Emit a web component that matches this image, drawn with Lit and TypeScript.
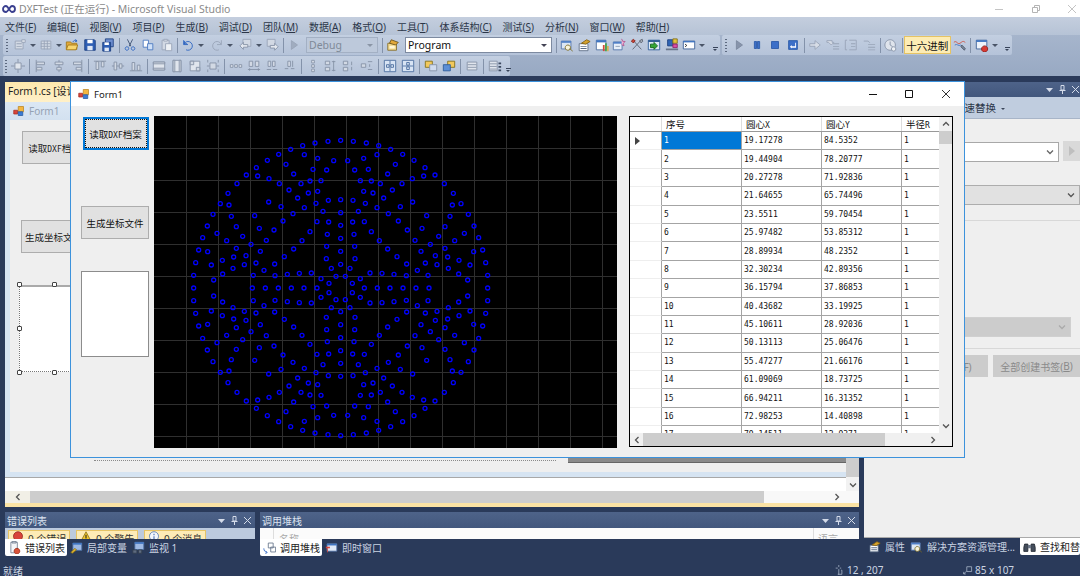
import { css, html, svg, LitElement } from "lit";
import { customElement } from "lit/decorators.js";

const GR = "#8591a6";
const FD = "#98a4b7";
const PALE = "#d2d9e4";
const BL = "#2a62c0";

// each icon is a list of [path, fill, stroke]
type Part = [string, string, string?];
const ICONS: Record<string, Part[]> = {
  formico: [["M7 2h7v7H7z", "#f4b63f", "#b98420"], ["M1 7h5v5H1z", "#d8443a", "#a52b22"], ["M7 9h6v5H7z", "#3a7bd5", "#24599f"]],
  newp: [["M2.5 3.5h9v9h-9z", PALE, FD], ["M4 6h6v1H4zM4 9h6v1H4z", FD], ["M10 2h4v3h-4z", "#dde2ea", FD]],
  add: [["M2.5 3.5h11v9h-11z", PALE, FD], ["M2 6.5h11M2 9.5h11M6 3v10M9.5 3v10", "none", FD]],
  open: [["M1.5 4.5h5l1 1.5h6v7h-12z", "#e3a93a", "#a47a1c"], ["M3.5 8h11l-2 5.5h-11z", "#f8d56e", "#a47a1c"], ["M9 4.5c1-2 3-2.5 4.5-1M12 1.5l1.8 2-2.4.5", "none", BL]],
  save: [["M2 2h11l1 1v11H2z", "#2f5fb4", "#1d3f80"], ["M5 2h6v4H5z", "#fff"], ["M5 9h6v5H5z", "#dfe7f4"]],
  saveall: [["M5 1h9v9H5z", "#6f8fd0", "#1d3f80"], ["M2 5h9v10H2z", "#2f5fb4", "#1d3f80"], ["M4 5h5v3H4z", "#fff"], ["M4 11h5v4H4z", "#dfe7f4"]],
  cut: [["M5 1.5l4 8M11 1.5l-4 8", "none", "#3c4f70"], ["M4.5 10a2 2 0 1 0 .01 0M11.5 10a2 2 0 1 0 .01 0", "none", BL]],
  copy: [["M2.5 2.5h6v8h-6z", "#fff", "#4a78c0"], ["M7.5 6.5h6v7h-6z", "#cfe0f7", "#4a78c0"]],
  paste: [["M3.5 2.5h8v11h-8z", PALE, FD], ["M5.5 1.5h4v2h-4z", "#e4e8ef", FD], ["M7.5 6.5h7v8h-7z", "#eef1f5", FD]],
  undo: [["M3 2.5v5h5", "none", BL], ["M3.3 7.2a5 5 0 1 1 2.5 6.3", "none", BL], ["M4 3.5v3h3", "none", BL]],
  redo: [["M13 2.5v5H8", "none", FD], ["M12.7 7.2a5 5 0 1 0-2.5 6.3", "none", FD]],
  navb: [["M4.5 1.5h9v8h-9z", PALE, FD], ["M1 9l4-4v2.5h5v3H5V13z", "#e4e8ef", GR]],
  navf: [["M2.5 1.5h9v8h-9z", PALE, FD], ["M15 10l-4-4v2.5H6v3h5V14z", "#e4e8ef", GR]],
  play: [["M5 3l7 5-7 5z", "#a0acbf", FD]],
  playd: [["M5 3l7 5-7 5z", "#8794ab", "#7c889e"]],
  config: [["M2 6h10v8H2z", "#f3d98b", "#86702f"], ["M6 2l8 3-3 3-7-2z", "#e3a93a", "#6b5518"], ["M4 9h6v3H4z", "#fff6d6"]],
  find: [["M1.5 3.5h11v9h-11z", "#dbe6f4", "#5173a8"], ["M1.5 3.5h11v2h-11z", "#4f7fc7"], ["M9 8a3 3 0 1 0 .01 0", "#f7f3dc", "#7b6a22"], ["M11 12l3.5 3", "none", "#7b6a22"]],
  props: [["M2.5 6.5h10v8h-10z", "#fff", "#5b6d86"], ["M4 9h7v1H4zM4 11.5h7v1H4z", "#5b6d86"], ["M5 6l6-4 4 2-5 3z", "#d6a32d", "#856214"]],
  chart: [["M1.5 2.5h11v11h-11z", "#fff", "#4a6d9e"], ["M1.5 2.5h11v2.5h-11z", "#3e74c2"], ["M9 8h2v7H9z", "#d14b3a"], ["M11.5 6h2v9h-2z", "#45a64a"], ["M14 9h1.5v6H14z", "#e2a92e"]],
  wstar: [["M1.5 4.5h10v9h-10z", "#e7effa", "#5173a8"], ["M1.5 4.5h10v2h-10z", "#4f7fc7"], ["M11 1l1.2 2.8 2.8.2-2 2 .7 3-2.7-1.5", "#f0b9d8", "#b2558f"], ["M4 9h5v1H4z", "#8a9ab0"]],
  tools: [["M3 2l10 11M13 2L3 13", "none", "#5c6470"], ["M1.5 3.5l2.5-2 2 2-2.5 2z", "#c9463a", "#86241b"], ["M11 3l3-1.5 .5 2.5-2 1.5z", "#aab3bf", "#5c6470"]],
  arrowbox: [["M1.5 2.5h13v11h-13z", "#dce8f6", "#2e5d99"], ["M1.5 2.5h13v2h-13z", "#27568f"], ["M4 7h4V5l4 4-4 4v-2H4z", "#34a534", "#14661c"]],
  tree: [["M3 2h6v7H3z", "#2f65b5", "#1d3f80"], ["M9 1h5v5H9z", "#e5c33c", "#84701a"], ["M9 7h5v4H9z", "#d94fa5", "#8d2268"], ["M1 12h14v2H1z", "#68758a"]],
  cmd: [["M1.5 3.5h13v9h-13z", "#fff", "#3a5f96"], ["M1.5 3.5h13v1.5h-13z", "#3e74c2"], ["M3.5 7l2 1.5-2 1.5", "none", "#222"]],
  pause: [["M5 4h2.5v8H5zM8.5 4H11v8H8.5z", "#3c6fc8", "#2c5aa8"]],
  stop: [["M4 4h8v8H4z", "#3c6fc8", "#2c5aa8"]],
  restart: [["M3 3h10v10H3z", "#3c6fc8", "#2c5aa8"], ["M10.5 5.5v4h-4V8l-2 2 2 2v-1h5V5.5z", "#fff"]],
  stepin: [["M2 6.5h6V3l6 5-6 5V9.5H2z", "#d6dce6", FD]],
  stepa: [["M1 3h6v2h2l-3 3-3-3H1z", "#d6dce6", FD], ["M8 6h7v1H8zM8 9h7v1H8zM8 12h7v1H8z", FD]],
  stepb: [["M3.5 2.5h-2v11h2", "none", FD], ["M6 2.5h8v11H6", "none", FD], ["M8 6h5v1H8zM8 9h5v1H8z", FD]],
  stepc: [["M2 3.5h5l2 2", "none", FD], ["M7 7h8v1H7zM7 10h8v1H7zM7 13h8v1H7z", FD]],
  clock: [["M7 2a6 6 0 1 0 .01 0", "#dfe4ec", GR], ["M7 4v4l3 2", "none", GR], ["M11 10a2.5 2.5 0 1 0 .01 0", "#eef1f5", GR]],
  wave: [["M1 5c3-3 4 3 7 1s3-3 6-1", "none", "#d14b3a"], ["M2 8c3-2 4 2 7 0", "none", "#3e74c2"], ["M10 8l4 4-1 2-4-4z", "#7b8799", "#4d596b"]],
  rec: [["M1.5 2.5h12v10h-12z", "#eef3fb", "#3a5f96"], ["M1.5 2.5h12v2h-12z", "#3e74c2"], ["M11 9a3.5 3.5 0 1 0 .01 0", "#d83a34", "#8d1f1b"]],
  snap: [["M4.5 4.5h7v7h-7z", "#e0e5ed", GR], ["M8 0v4M8 12v4M0 8h4M12 8h4", "none", GR]],
  al: [["M2.5 1v14", "none", GR], ["M3 3.5h9v3H3zM3 9.5h6v3H3z", PALE, GR]],
  ac: [["M8 1v14", "none", GR], ["M3.5 3.5h9v3h-9zM5.5 9.5h5v3h-5z", PALE, GR]],
  ar: [["M13.5 1v14", "none", GR], ["M4 3.5h9v3H4zM7 9.5h6v3H7z", PALE, GR]],
  at: [["M1 2.5h14", "none", GR], ["M3.5 3h3v9h-3zM9.5 3h3v6h-3z", PALE, GR]],
  am: [["M1 8h14", "none", GR], ["M3.5 3.5h3v9h-3zM9.5 5.5h3v5h-3z", PALE, GR]],
  ab: [["M1 13.5h14", "none", GR], ["M3.5 4h3v9h-3zM9.5 7h3v6h-3z", PALE, GR]],
  sw: [["M1.5 3.5h13v9h-13z", "#e0e5ed", GR], ["M1.5 3.5h13v2h-13zM1.5 10.5h13v2h-13z", PALE, GR]],
  sh: [["M3.5 1.5h9v13h-9z", "#e0e5ed", GR], ["M3.5 1.5h2v13h-2zM10.5 1.5h2v13h-2z", PALE, GR]],
  sb: [["M2.5 2.5h11v11h-11z", "#e0e5ed", GR], ["M2.5 2.5h4v4h-4zM9.5 9.5h4v4h-4z", PALE, GR]],
  sg: [["M4.5 4.5h7v7h-7z", PALE, GR], ["M2 1v3M14 1v3M2 12v3M14 12v3M1 8h3M12 8h3", "none", GR]],
  hs1: [["M1.5 6.5h3v3h-3zM6.5 6.5h3v3h-3zM11.5 6.5h3v3h-3z", "#e0e5ed", GR]],
  hs2: [["M2.5 2.5h4v6h-4zM9.5 2.5h4v6h-4z", PALE, GR], ["M1 12h14M3 10.5v3M13 10.5v3", "none", GR]],
  hs3: [["M3.5 2.5h3v6h-3zM8.5 2.5h3v6h-3z", PALE, GR], ["M2 12h5M9 12h5", "none", GR]],
  hs4: [["M5.5 2.5h3v6h-3z", PALE, GR], ["M11 2v7M2 11h4M9 11h4", "none", GR]],
  vs1: [["M6.5 1.5h3v3h-3zM6.5 6.5h3v3h-3zM6.5 11.5h3v3h-3z", "#e0e5ed", GR]],
  vs2: [["M1.5 2.5h5v4h-5zM1.5 9.5h5v4h-5z", PALE, GR], ["M11 2v12M9 3h4M9 13h4", "none", GR]],
  vs3: [["M1.5 2.5h5v4h-5zM1.5 9.5h5v4h-5z", PALE, GR], ["M11 3v4M11 9v4", "none", GR]],
  vs4: [["M1.5 5.5h5v4h-5z", PALE, GR], ["M9 3h5M11 6v3M9 12h5", "none", GR]],
  ch: [["M1.5 1.5h13v13h-13z", "#d8e4f4", "#4a6d9e"], ["M8 2v12M4 6.5h3v3H4zM9 6.5h3v3H9z", "none", "#4a6d9e"]],
  cv: [["M1.5 1.5h13v13h-13z", "#d8e4f4", "#4a6d9e"], ["M2 8h12M6.5 4h3v3h-3zM6.5 9h3v3h-3z", "none", "#4a6d9e"]],
  front: [["M1.5 2.5h8v7h-8z", "#f2c95c", "#84701a"], ["M6.5 6.5h8v7h-8z", "#d0dcf0", GR]],
  back: [["M6.5 2.5h8v7h-8z", "#f2c95c", "#84701a"], ["M1.5 6.5h8v7h-8z", "#5d8fd6", "#2e5d99"]],
  tab1: [["M2.5 3.5h11v9h-11z", "#e0e5ed", GR], ["M3 6.5h10M3 9.5h10", "none", GR]],
  tab2: [["M1.5 2.5h9v11h-9z", "#e0e5ed", GR], ["M2 5.5h8M2 8.5h8M2 11.5h8", "none", GR], ["M12 4h3v2h-3zM12 8h3v2h-3zM12 12h3v2h-3z", "#3d4a60"]],
  errs: [["M3.5 1.5h8v13h-8z", "#f4f6f9", "#6e7b8e"], ["M5 .5h5v2H5z", "#cdd4de", "#6e7b8e"], ["M11 9a3.5 3.5 0 1 0 .01 0", "#d8533a", "#9c2c1a"]],
  locals: [["M3.5 2.5h11v9h-11z", "#9eb9e4", "#4a6d9e"], ["M3.5 2.5h11v2h-11z", "#3e74c2"], ["M1 14l5-5 2 2-5 4z", "#e0b431", "#86701a"]],
  watch: [["M3.5 1.5h11v9h-11z", "#9eb9e4", "#4a6d9e"], ["M3.5 1.5h11v2h-11z", "#3e74c2"], ["M1 11h5v4H1zM8 11h4v4H8z", "#5e6b80", "#333d4d"]],
  stack: [["M6.5 2.5h6v6h-6zM9.5 7.5h6v6h-6z", "#fff", "#5f6f85"], ["M1 9c0 3 2 5 4 5", "none", BL], ["M3 12l2 2-2 2", "none", BL]],
  imm: [["M2.5 3.5h12v9h-12z", "#dfe9f7", "#5173a8"], ["M2.5 3.5h12v2h-12z", "#3e74c2"], ["M1 7h5v2H1z", "#d8443a"], ["M3 9v5", "none", "#d8443a"]],
  binoc: [["M2 5h4v9H1V9zM10 5h4l1 4v5h-5z", "#444d5c", "#20262f"], ["M6 6h4v4H6z", "#6b7688"]],
  errc: [["M8 1a6 6 0 1 0 .01 0", "#d8443a", "#8d1f1b"]],
  warn: [["M8 1l7 13H1z", "#f0c62e", "#846b11"], ["M7.3 5h1.4v5H7.3z", "#222"]],
  info: [["M8 1a6 6 0 1 0 .01 0", "#f2f6fc", "#3f6bb0"], ["M7.3 3.5h1.4v2H7.3zM7.3 7h1.4v5H7.3z", "#3f6bb0"]],
  posi: [["M5.5 0v3M5.5 6v8M1 4.5h3M7 4.5h2M9 7.5h1v6H4", "none", "#bcc7d8"]],
  sizei: [["M5.5 2.5h7v7h-7z", "none", "#bcc7d8"], ["M1 13l4-4M1 10v3h3", "none", "#bcc7d8"]],
};

const ico = (name: string) =>
  html`<svg class="ico" viewBox="0 0 16 16" aria-hidden="true">
    ${ICONS[name].map(([d, fill, stroke]) => svg`<path d=${d} fill=${fill} stroke=${stroke ?? "none"} stroke-width="1"/>`)}
  </svg>`;

const CHEV = { up: "M1 5.5l3-3 3 3", down: "M1 2.5l3 3 3-3", left: "M5.5 1l-3 3 3 3", right: "M2.5 1l3 3-3 3" };
const chev = (dir: keyof typeof CHEV, color = "#555") =>
  html`<svg class="cv-ico" viewBox="0 0 8 8"><path d=${CHEV[dir]} fill="none" stroke=${color} stroke-width="1.3" /></svg>`;

const bar = (tokens: string) =>
  tokens.split(" ").map((t) => {
    if (t === "|") return html`<span class="sep"></span>`;
    if (t === "g") return html`<span class="grip"></span>`;
    if (t === "v") return html`<span class="drop"></span>`;
    if (t === "V") return html`<span class="drop wide"></span>`;
    if (t === "o") return html`<span class="over"></span>`;
    return html`<span class="btn">${ico(t)}</span>`;
  });

const MENU: [string, string][] = [
  ["文件", "F"], ["编辑", "E"], ["视图", "V"], ["项目", "P"], ["生成", "B"], ["调试", "D"], ["团队", "M"],
  ["数据", "A"], ["格式", "O"], ["工具", "T"], ["体系结构", "C"], ["测试", "S"], ["分析", "N"], ["窗口", "W"], ["帮助", "H"],
];

const ROWS: [string, string][] = [
  ["19.17278", "84.5352"], ["19.44904", "78.20777"], ["20.27278", "71.92836"], ["21.64655", "65.74496"],
  ["23.5511", "59.70454"], ["25.97482", "53.85312"], ["28.89934", "48.2352"], ["32.30234", "42.89356"],
  ["36.15794", "37.86853"], ["40.43682", "33.19925"], ["45.10611", "28.92036"], ["50.13113", "25.06476"],
  ["55.47277", "21.66176"], ["61.09069", "18.73725"], ["66.94211", "16.31352"], ["72.98253", "14.40898"],
  ["79.14511", "12.9371"],
];

// top-left quadrant of the hole pattern, the rest is mirrored
const QUAD: [number, number][] = [
  [572, 91], [534, 94], [495, 99], [458, 107], [422, 118], [386, 133], [352, 151], [319, 173], [289, 195], [261, 221],
  [234, 250], [211, 281], [189, 313], [172, 348], [158, 383], [146, 420], [137, 458], [131, 496], [131, 534],
  [463, 134], [503, 145], [551, 152], [408, 163], [489, 178], [530, 180], [431, 192], [323, 198], [357, 206], [480, 213],
  [513, 212], [388, 221], [453, 221], [417, 240], [475, 249], [503, 244], [237, 285], [356, 276], [443, 264], [535, 271],
  [572, 269], [393, 290], [463, 293], [498, 280], [244, 319], [314, 317], [429, 311], [519, 304], [572, 308], [259, 350],
  [328, 355], [372, 360], [399, 333], [501, 335], [536, 336], [572, 346], [201, 370], [278, 379], [230, 392], [349, 391],
  [480, 365], [532, 373], [572, 385], [303, 403], [456, 392], [173, 425], [259, 415], [331, 424], [431, 417], [530, 409],
  [572, 424], [288, 437], [251, 441], [403, 440], [529, 446], [217, 451], [184, 465], [249, 475], [283, 464], [318, 459],
  [374, 462], [342, 481], [544, 475], [572, 463], [218, 492], [310, 496], [375, 497], [412, 493], [448, 490], [484, 489],
  [513, 506], [558, 499], [191, 510], [307, 534], [346, 534], [385, 534], [424, 534], [462, 534], [501, 534], [537, 520],
];

const CX = 186.67; // pattern centre inside the chart
const CY = 172;

function holes(): [number, number][] {
  const out: [number, number][] = [];
  for (const [zx, zy] of QUAD) {
    const x = 150 + zx / 3 - 154;
    const y = 110 + zy / 3 - 116;
    const mx = 2 * CX - x;
    const my = 2 * CY - y;
    out.push([x, y]);
    if (zx !== 572) out.push([mx, y]);
    if (zy !== 534) out.push([x, my]);
    if (zx !== 572 && zy !== 534) out.push([mx, my]);
  }
  return out;
}

const VLINES = Array.from({ length: 14 }, (_, i) => 32.5 + i * 32);
const HLINES = Array.from({ length: 10 }, (_, i) => 32.5 + i * 32);

@customElement("app-root")
export class AppRoot extends LitElement {
  static styles = css`
    :host {
      display: block;
      width: 1080px;
      height: 576px;
      overflow: hidden;
      font-family: "Noto Sans", "Noto Sans CJK SC", sans-serif;
      font-size: 10px;
      color: #222;
    }
    .ico { width: 16px; height: 16px; display: block; flex: none; }
    .cv-ico { width: 8px; height: 8px; display: block; flex: none; }
    .vs { width: 1080px; height: 576px; position: relative; display: flex; flex-direction: column; overflow: hidden;
      background: #2a3a5a; }

    .title { height: 17px; background: #fff; display: flex; align-items: center; padding-left: 2px; flex: none; overflow: hidden; }
    .title .logo { width: 14px; height: 8px; margin-right: 3px; }
    .title .txt { flex: 1; color: #8a8a8a; font-size: 10.5px; white-space: nowrap; }
    .wc { width: 36.5px; display: flex; justify-content: center; flex: none; }
    .wc:last-child { margin-right: -10.5px; }
    .wc svg { width: 10px; height: 10px; }

    .menu { height: 18px; flex: none; display: flex; align-items: center; padding-left: 5px; gap: 10.9px;
      background: linear-gradient(#c4cede, #b6c3d6); color: #2b3648; white-space: nowrap; }
    .menu u { text-underline-offset: 1px; }

    .tools { height: 41px; flex: none; background: linear-gradient(#a6b5cc, #98a9c3); display: flex; flex-direction: column; gap: 1px; }
    .row { height: 20px; display: flex; padding-left: 3px; gap: 2px; }
    .tb { height: 20px; display: flex; align-items: center; background: linear-gradient(#c3cfe1, #b5c3d9); border-radius: 2px; }
    .tb.t1 { width: 717px; }
    .tb.t2 { width: 290px; }
    .tb.t3 { width: 507px; }
    .btn { width: 18px; height: 18px; display: flex; align-items: center; justify-content: center; flex: none; }
    .btn .ico { width: 14px; height: 14px; }
    .tight { display: contents; }
    .tight .btn { width: 17.5px; }
    .sep { width: 4px; height: 15px; flex: none; background: linear-gradient(#8392aa, #8392aa) center / 1px 100% no-repeat; }
    .r2 .sep { width: 5px; }
    .grip { width: 8px; height: 14px; flex: none;
      background: radial-gradient(circle, #5d6a80 45%, transparent 50%) center top / 2px 3px repeat-y; }
    .r2 .grip { width: 6px; }
    .drop { width: 8px; height: 18px; flex: none; position: relative; }
    .drop.wide { width: 11px; }
    .drop::after { content: ""; position: absolute; left: 1px; top: 8px; border: 3px solid transparent; border-top-color: #4a5568; border-bottom: 0; }
    .over { width: 9px; height: 18px; flex: none; position: relative; margin-left: auto; }
    .over::before { content: ""; position: absolute; left: 2px; top: 11px; width: 5px; height: 1px; background: #38445a; }
    .over::after { content: ""; position: absolute; left: 2px; top: 13px; border: 2.5px solid transparent; border-top-color: #38445a; border-bottom: 0; }
    .combo { height: 16px; margin: 0 2px 0 3px; display: flex; align-items: center; padding-left: 2px; box-sizing: border-box; font-size: 10.5px; position: relative; flex: none; }
    .combo.debug { width: 72px; background: #bdc9db; border: 1px solid #a3b0c4; color: #7f8998; }
    .combo.prog { width: 147px; background: #fff; border: 1px solid #7d8aa0; color: #111; }
    .combo::after { content: ""; position: absolute; right: 4px; top: 6px; border: 3px solid transparent; border-top-color: #445; border-bottom: 0; }
    .combo.debug::after { border-top-color: #8a95a6; }
    .hex { width: 46.5px; height: 18px; flex: none; box-sizing: border-box; background: #fdecb4; border: 1px solid #e5c365; font-size: 10.5px;
      display: flex; align-items: center; justify-content: center; color: #111; }

    .main { height: 480px; padding: 6px 0 0 5px; flex: none; box-sizing: border-box; display: flex; gap: 5px; }
    .left { width: 854px; flex: none; display: flex; flex-direction: column; }

    .doc { height: 425px; flex: none; display: flex; flex-direction: column; background: #fff; }
    .doctab { height: 20px; flex: none; background: linear-gradient(#fde8ad, #fff0c8); padding-left: 3px; line-height: 18px; font-size: 10px; white-space: nowrap; }
    .docbody { flex: 1; min-height: 0; display: flex; }
    .view { flex: 1; display: flex; flex-direction: column; }
    .dband { height: 18px; flex: none; display: flex; align-items: center; gap: 4px; padding-left: 8px; color: #95a2b3; font-size: 10px;
      background: linear-gradient(#dbe7f4, #d3e1f0); }
    .dband .ico { width: 12px; height: 12px; }
    .surfwrap { flex: 1; padding-left: 5px; background: #d6e4f2; display: flex; }
    .surface { flex: 1; background: #efefef; position: relative; }
    .lband { height: 5px; flex: none; background: #d6e4f2; }
    .lline { height: 1px; flex: none; background: #a8a8a8; }
    .lwhite { height: 13px; flex: none; background: #fff; }
    .d-btn { position: absolute; box-sizing: border-box; background: #e1e1e1; border: 1px solid #adadad; display: flex; align-items: center;
      justify-content: center; white-space: nowrap; font-size: 9.5px; overflow: hidden; }
    .d-btn.a { left: 11.5px; top: 11px; width: 66px; height: 33px; }
    .d-btn.b { left: 11px; top: 100px; width: 65px; height: 33px; }
    .d-box { position: absolute; left: 9px; top: 165px; width: 70px; height: 87px; box-sizing: border-box; background: #fff; border-left: 1px dotted #777;
      border-top: 2px solid #aaa; border-bottom: 1px dotted #777; }
    .hd { position: absolute; width: 5px; height: 5px; box-sizing: border-box; background: #fff; border: 1px solid #444; border-radius: 1px; }
    .hd.p1 { left: 7px; top: 162px; } .hd.p2 { left: 42px; top: 162px; }
    .hd.p3 { left: 7px; top: 206px; } .hd.p4 { left: 7px; top: 250px; } .hd.p5 { left: 42px; top: 250px; }
    .d-dots { position: absolute; left: 84px; top: 340px; width: 462px; border-top: 1px dotted #8a8a8a; }
    .d-edge { position: absolute; left: 558px; top: 337px; right: 0; height: 5px; background: #8a8a8a; border-bottom: 1px solid #666; }

    .dvs { width: 13px; flex: none; background: #f2f2f2; display: flex; flex-direction: column; }
    .dvs .th { flex: 1; background: #cdcdcd; margin: 0 0 14px; }
    .dvs .ar { height: 13px; display: flex; align-items: center; justify-content: center; margin-top: -13px; }
    .dhs { height: 12px; flex: none; display: flex; background: #f8f8f8; }
    .dhs .l { width: 25px; background: #f1efe6; display: flex; align-items: center; justify-content: center; }
    .dhs .th { width: 734px; background: #cdcdcd; }
    .dhs .r { flex: 1; display: flex; align-items: center; justify-content: flex-end; padding-right: 18px; }
    .yline { height: 4px; flex: none; background: #fbe3a4; }

    .docks { display: flex; gap: 5px; margin-top: 5px; }
    .dock { display: flex; flex-direction: column; }
    .dock.e { width: 250px; }
    .dock.c { width: 599px; }
    .panel { height: 27px; overflow: hidden; display: flex; flex-direction: column; }
    .ptitle { height: 16px; flex: none; background: linear-gradient(#4e6389, #42577d); color: #dbe3f0; display: flex; align-items: center; padding: 0 3px 0 2px; font-size: 10px; }
    .ptitle .sp { flex: 1; }
    .pctl { display: flex; align-items: center; gap: 4px; }
    .pctl svg { width: 9px; height: 9px; display: block; }
    .errbar { flex: 1; background: #bccade; display: flex; gap: 6px; padding: 2px 0 0 3px; }
    .errbtn { width: 62px; height: 18px; box-sizing: border-box; flex: none; background: #fdebb6; border: 1px solid #e5c365; display: flex; gap: 4px; padding-left: 3px; align-items: flex-start; color: #333; white-space: nowrap; }
    .errbtn .ico { width: 12px; height: 12px; }
    .stackhead { flex: 1; background: #fbfbfb; display: flex; color: #aaa; }
    .stackhead .n { margin-left: 13px; border-left: 1px solid #ddd; padding: 3px 0 0 5px; width: 540px; box-sizing: border-box; }
    .stackhead .l { border-left: 1px solid #ddd; padding: 3px 0 0 4px; }

    .tabs { height: 17px; display: flex; flex: none; color: #c9d3e2; white-space: nowrap; }
    .tab { display: flex; align-items: center; gap: 4px; padding: 0 2px 0 3px; height: 17px; box-sizing: border-box; }
    .tab .ico { width: 13px; height: 13px; }
    .tab.on { background: #fff; color: #222; border-radius: 0 0 2px 2px; }

    .right { flex: 1; display: flex; flex-direction: column; min-width: 0; }
    .rpanel { height: 456px; flex: none; background: #efefef; display: flex; flex-direction: column; overflow: hidden; border-bottom: 1px solid #aaa; box-sizing: border-box; }
    .rtitle { height: 15px; flex: none; background: linear-gradient(#4e6389, #42577d); display: flex; justify-content: flex-end; align-items: center; }
    .rband { height: 22px; flex: none; background: #c0cddf; border-bottom: 1px solid #a8b5c8; box-sizing: border-box; padding-left: 90px; display: flex; align-items: center; gap: 5px; color: #2b3648; white-space: nowrap; font-size: 10.5px; }
    .rband i { width: 0; height: 0; border: 2.5px solid transparent; border-top-color: #3b465a; border-bottom: 0; margin-top: 2px; }
    .rbody { flex: 1; display: flex; flex-direction: column; padding-left: 6px; }
    .rrow { display: flex; gap: 4px; }
    .cb { height: 20px; box-sizing: border-box; display: flex; align-items: center; justify-content: flex-end; padding-right: 4px; }
    .cb1 { margin-top: 23px; width: 189px; background: #fff; border: 1px solid #a8a8a8; }
    .go { margin-top: 22px; width: 17px; height: 20px; background: #d9d9d9; display: flex; align-items: center; justify-content: center; }
    .go::after { content: ""; border: 5px solid transparent; border-left: 6px solid #bfbfbf; border-right: 0; }
    .cb2 { margin-top: 23px; width: 210px; background: #e1e1e1; border: 1px solid #adadad; }
    .hr { height: 1px; background: #d8d8d8; margin-left: -6px; }
    .hr.h1 { margin-top: 15px; }
    .hr.h2 { margin-top: 11px; }
    .cb3 { margin-top: 96px; width: 201px; background: #ccc; border: 1px solid #d0d0d0; }
    .rbtns { display: flex; gap: 5px; margin-top: 6px; }
    .rb { height: 22px; background: #ccc; color: #8a8a8a; display: flex; align-items: center; justify-content: center; white-space: nowrap; flex: none; box-sizing: border-box; }
    .rb.a { width: 118px; padding-left: 24px; }
    .rb.b { width: 87px; }
    .rtabs { padding-left: 1px; justify-content: flex-start; }
    .rtabs .on { flex: 1; margin-left: 3px; overflow: hidden; }

    .status { height: 20px; flex: none; display: flex; align-items: center; color: #ccd5e3; white-space: nowrap; padding-top: 8px; box-sizing: border-box; }
    .status .ready { width: 835px; padding-left: 3px; box-sizing: border-box; }
    .status .pos { width: 128px; display: flex; align-items: center; gap: 1px; }
    .status .ico { width: 11px; height: 13px; }
    .status .size { display: flex; align-items: center; gap: 1px; }

    /* the running Form1 floats over the IDE */
    .form { position: absolute; left: 70px; top: 81px; width: 895px; height: 377px; box-sizing: border-box; border: 1px solid #3c92dc; background: #efefef; display: flex; flex-direction: column; }
    .fbar { height: 24px; flex: none; background: #fff; display: flex; align-items: center; padding: 0 2px 0 7px; gap: 4px; font-size: 9.5px; color: #222; }
    .fbar .ico { width: 12px; height: 12px; }
    .fbar .sp { flex: 1; }
    .fctl { width: 32.5px; display: flex; justify-content: center; }
    .fctl svg { width: 10px; height: 10px; display: block; }
    .fbody { flex: 1; display: flex; padding: 10px 0 0 10px; }
    .fcol { width: 68px; flex: none; display: flex; flex-direction: column; }
    .wbtn { box-sizing: border-box; height: 33px; background: #e1e1e1; border: 1px solid #adadad; display: flex; align-items: center; justify-content: center; white-space: nowrap; color: #111; font-size: 9.5px; }
    .wbtn.f { margin: 1px 0 0 1.5px; width: 66px; border: 2px solid #0078d7; outline: 1px dotted #111; outline-offset: -3px; }
    .wbtn.n { margin-top: 56px; }
    .wbox { margin-top: 32px; height: 86px; box-sizing: border-box; background: #fff; border: 1px solid #8c8c8c; }
    .lat { font: 8px "DejaVu Sans Mono", monospace; margin-top: 3px; }
    .chart { width: 463px; height: 332px; margin-left: 5px; flex: none; display: block; background: #000; }

    .dgv { width: 324px; height: 331px; margin-left: 12px; box-sizing: border-box; border: 1px solid #000; background: #fff; flex: none; display: flex; flex-direction: column; }
    .dtop { flex: 1; min-height: 0; display: flex; }
    .dview { flex: 1; min-width: 0; overflow: hidden; }
    .drow { display: flex; height: 18.4px; box-sizing: border-box; border-bottom: 1px solid #a4a4a4; font: 8px "DejaVu Sans Mono", "Noto Sans CJK SC", monospace; color: #111; }
    .drow.head { height: 15px; border-bottom: 1px solid #999; font: 9.5px "Noto Sans CJK SC", sans-serif; }
    .rh { width: 32px; flex: none; display: flex; align-items: center; padding-left: 5px; box-sizing: border-box; border-bottom: 1px solid #eee; border-right: 1px solid #a4a4a4; margin-bottom: -1px; background: #fff; }
    .head .rh { border-bottom: 0; margin-bottom: 0; border-right-color: #ddd; }
    .rh i { width: 0; height: 0; border: 4px solid transparent; border-left: 5px solid #444; border-right: 0; }
    .dc { width: 80px; flex: none; box-sizing: border-box; border-right: 1px solid #a4a4a4; padding-left: 2px; display: flex; align-items: center; white-space: nowrap; overflow: hidden; }
    .head .dc { padding-left: 4px; border-right-color: #ddd; }
    .dc.last { width: 36px; border: 0; }
    .dc.sel { background: #0078d7; color: #fff; }
    .dvbar { width: 13px; flex: none; background: #f0f0f0; display: flex; flex-direction: column; align-items: center; }
    .dvbar .up { height: 14px; display: flex; align-items: center; }
    .dvbar .th { height: 13px; width: 100%; background: #cdcdcd; }
    .dvbar .mid { flex: 1; }
    .dvbar .dn { height: 14px; display: flex; align-items: center; }
    .dhbar { height: 13px; flex: none; display: flex; background: #f0f0f0; }
    .dhbar .a { width: 13px; display: flex; align-items: center; justify-content: center; }
    .dhbar .th { width: 242px; background: #cdcdcd; }
    .dhbar .fill { flex: 1; }
    .dhbar .b { width: 13px; display: flex; align-items: center; justify-content: center; }
    .dhbar .c { width: 13px; }
  `;

  private pts = holes();

  private ctl(stroke: string, kind: "min" | "max" | "restore" | "close") {
    const d = {
      min: "M1 5.5h8",
      max: "M1.5 1.5h7v7h-7z",
      restore: "M1.5 3.5h5v5h-5zM3.5 3.5v-2h5v5h-2",
      close: "M1 1l8 8M9 1l-8 8",
    }[kind];
    return html`<svg viewBox="0 0 10 10"><path d=${d} fill="none" stroke=${stroke} /></svg>`;
  }

  private pctl(light: string) {
    return html`<span class="pctl">
      <svg viewBox="0 0 9 9"><path d="M1 3h7L4.5 7z" fill=${light} /></svg>
      <svg viewBox="0 0 9 9"><path d="M3 .5h3V5H3zM1.5 5.5h6M4.5 6v3" fill="none" stroke=${light} /></svg>
      <svg viewBox="0 0 9 9"><path d="M1 1l7 7M8 1L1 8" fill="none" stroke=${light} /></svg>
    </span>`;
  }

  private renderChart() {
    return html`<svg class="chart" viewBox="0 0 463 332">
      ${VLINES.map((x) => svg`<line x1=${x} x2=${x} y1="0" y2="332" stroke="#2f2f2f" />`)}
      ${HLINES.map((y) => svg`<line x1="0" x2="463" y1=${y} y2=${y} stroke="#2f2f2f" />`)}
      ${this.pts.map(([x, y]) => svg`<circle cx=${x} cy=${y} r="2" fill="none" stroke="#0000ff" stroke-width="1.3" />`)}
    </svg>`;
  }

  private renderGrid() {
    return html`<div class="dgv">
      <div class="dtop">
        <div class="dview">
          <div class="drow head">
            <span class="rh"></span>
            <span class="dc">序号</span>
            <span class="dc">圆心<span class="lat">X</span></span>
            <span class="dc">圆心<span class="lat">Y</span></span>
            <span class="dc last">半径<span class="lat">R</span></span>
          </div>
          ${ROWS.map(
            ([x, y], i) => html`<div class="drow">
              <span class="rh">${i === 0 ? html`<i></i>` : ""}</span>
              <span class="dc ${i === 0 ? "sel" : ""}">${i + 1}</span>
              <span class="dc">${x}</span>
              <span class="dc">${y}</span>
              <span class="dc last">1</span>
            </div>`
          )}
        </div>
        <div class="dvbar">
          <span class="up">${chev("up")}</span>
          <span class="th"></span>
          <span class="mid"></span>
          <span class="dn">${chev("down")}</span>
        </div>
      </div>
      <div class="dhbar">
        <span class="a">${chev("left")}</span>
        <span class="th"></span>
        <span class="fill"></span>
        <span class="b">${chev("right")}</span>
        <span class="c"></span>
      </div>
    </div>`;
  }

  private renderForm() {
    return html`<div class="form">
      <div class="fbar">
        ${ico("formico")}
        <span>Form1</span>
        <span class="sp"></span>
        <span class="fctl">${this.ctl("#111", "min")}</span>
        <span class="fctl">${this.ctl("#111", "max")}</span>
        <span class="fctl">${this.ctl("#333", "close")}</span>
      </div>
      <div class="fbody">
        <div class="fcol">
          <div class="wbtn f">读取<span class="lat">DXF</span>档案</div>
          <div class="wbtn n">生成坐标文件</div>
          <div class="wbox"></div>
        </div>
        ${this.renderChart()}
        ${this.renderGrid()}
      </div>
    </div>`;
  }

  render() {
    return html`<div class="vs">
      <div class="title">
        <svg class="logo" viewBox="0 0 14 8"><path d="M4 1a3 3 0 1 0 0 6c2 0 4-6 6-6a3 3 0 1 1 0 6C8 7 6 1 4 1z" fill="none" stroke="#3a3f8f" stroke-width="1.8" /></svg>
        <span class="txt">DXFTest (正在运行) - Microsoft Visual Studio</span>
        <span class="wc">${this.ctl("#c4c4c4", "min")}</span>
        <span class="wc">${this.ctl("#b4b4b4", "restore")}</span>
        <span class="wc">${this.ctl("#c4c4c4", "close")}</span>
      </div>

      <div class="menu">
        ${MENU.map(([t, k]) => html`<span>${t}(<u>${k}</u>)</span>`)}
      </div>

      <div class="tools">
        <div class="row">
          <div class="tb t1">
            ${bar("g newp v add v open save saveall | cut copy paste | undo V redo V navb v navf | play")}
            <span class="combo debug">Debug</span>
            ${bar("|")}
            ${bar("config")}
            <span class="combo prog">Program</span>
            ${bar("|")}
            <span class="tight">${bar("find props chart wstar tools arrowbox tree cmd v o")}</span>
          </div>
          <div class="tb t2">
            ${bar("g playd pause stop restart | stepin stepa stepb stepc | clock |")}
            <span class="hex">十六进制</span>
            ${bar("wave | rec v o")}
          </div>
        </div>
        <div class="row r2">
          <div class="tb t3">
            ${bar("g snap | al ac ar | at am ab | sw sh sb sg | hs1 hs2 hs3 hs4 | vs1 vs2 vs3 vs4 | ch cv | front back | tab1 | tab2 o")}
          </div>
        </div>
      </div>

      <div class="main">
        <div class="left">
          <div class="doc">
            <div class="doctab">Form1.cs [设计]</div>
            <div class="docbody">
              <div class="view">
                <div class="dband">${ico("formico")}<span>Form1</span></div>
                <div class="surfwrap">
                  <div class="surface">
                    <div class="d-btn a">读取<span class="lat">DXF</span>档案</div>
                    <div class="d-btn b">生成坐标文件</div>
                    <div class="d-box"></div>
                    <i class="hd p1"></i><i class="hd p2"></i><i class="hd p3"></i><i class="hd p4"></i><i class="hd p5"></i>
                    <div class="d-dots"></div>
                    <div class="d-edge"></div>
                  </div>
                </div>
                <div class="lband"></div>
                <div class="lline"></div>
                <div class="lwhite"></div>
              </div>
              <div class="dvs">
                <span class="th"></span>
                <span class="ar">${chev("down")}</span>
              </div>
            </div>
            <div class="dhs">
              <span class="l">${chev("left")}</span>
              <span class="th"></span>
              <span class="r">${chev("right")}</span>
            </div>
            <div class="yline"></div>
          </div>

          <div class="docks">
            <div class="dock e">
              <div class="panel">
                <div class="ptitle"><span>错误列表</span><span class="sp"></span>${this.pctl("#d5dcea")}</div>
                <div class="errbar">
                  <span class="errbtn">${ico("errc")}0 个错误</span>
                  <span class="errbtn">${ico("warn")}0 个警告</span>
                  <span class="errbtn">${ico("info")}0 个消息</span>
                </div>
              </div>
              <div class="tabs">
                <span class="tab on">${ico("errs")}错误列表</span>
                <span class="tab">${ico("locals")}局部变量</span>
                <span class="tab">${ico("watch")}监视 1</span>
              </div>
            </div>
            <div class="dock c">
              <div class="panel">
                <div class="ptitle"><span>调用堆栈</span><span class="sp"></span>${this.pctl("#d5dcea")}</div>
                <div class="stackhead"><span class="n">名称</span><span class="l">语言</span></div>
              </div>
              <div class="tabs">
                <span class="tab on">${ico("stack")}调用堆栈</span>
                <span class="tab">${ico("imm")}即时窗口</span>
              </div>
            </div>
          </div>
        </div>

        <div class="right">
          <div class="rpanel">
            <div class="rtitle">${this.pctl("#d5dcea")}</div>
            <div class="rband">快速替换<i></i></div>
            <div class="rbody">
              <div class="rrow">
                <div class="cb cb1">${chev("down", "#666")}</div>
                <div class="go"></div>
              </div>
              <div class="cb cb2">${chev("down", "#555")}</div>
              <div class="hr h1"></div>
              <div class="cb cb3">${chev("down", "#aaa")}</div>
              <div class="hr h2"></div>
              <div class="rbtns">
                <div class="rb a">查找下一个(F)</div>
                <div class="rb b">全部创建书签(<u>B</u>)</div>
              </div>
            </div>
          </div>
          <div class="tabs rtabs">
            <span class="tab">${ico("props")}属性</span>
            <span class="tab">${ico("find")}解决方案资源管理...</span>
            <span class="tab on">${ico("binoc")}查找和替换</span>
          </div>
        </div>
      </div>

      <div class="status">
        <span class="ready">就绪</span>
        <span class="pos">${ico("posi")}12 , 207</span>
        <span class="size">${ico("sizei")}85 x 107</span>
      </div>

      ${this.renderForm()}
    </div>`;
  }
}
